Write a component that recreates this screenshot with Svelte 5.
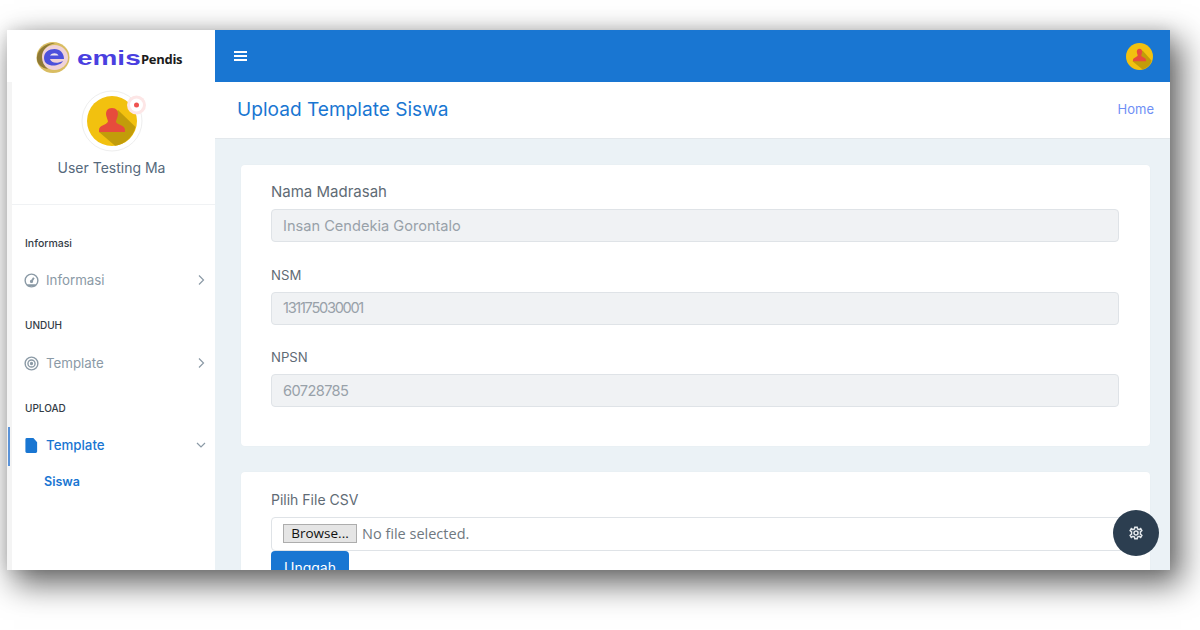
<script>
  const fields = [
    { label: "Nama Madrasah", value: "Insan Cendekia Gorontalo", kind: "long" },
    { label: "NSM", value: "131175030001", kind: "code" },
    { label: "NPSN", value: "60728785", kind: "num" }
  ];
</script>

<style>
  :global(body) {
    background: #fff;
    font-family: Inter, "Open Sans", sans-serif;
  }
  * {
    box-sizing: border-box;
  }
  .page {
    height: 630px;
    padding: 30px 30px 0 7px;
    overflow: hidden;
  }
  .frame {
    position: relative;
    display: flex;
    height: 540px;
    background: #fff;
    box-shadow: 0 0 14px rgba(0, 0, 0, 0.1), 9px 12px 30px 2px rgba(0, 0, 0, 0.6);
  }
  .sidebar {
    width: 208px;
    flex: none;
    display: flex;
    flex-direction: column;
    overflow: hidden;
    background: #fff;
  }
  .brand {
    height: 52px;
    flex: none;
    display: flex;
    align-items: center;
    padding: 3px 0 0 29px;
    white-space: nowrap;
  }
  .emis {
    display: inline-block;
    width: 64px;
    margin-left: 7px;
    color: #4a3fe0;
    font: 700 21px/1 "Liberation Sans", sans-serif;
    transform: scaleX(1.33);
    transform-origin: left;
  }
  .pendis {
    color: #1c1c1c;
    font: 700 13px/1 "Open Sans", sans-serif;
    letter-spacing: -0.3px;
    margin-top: 3px;
  }
  .side-body {
    flex: 1;
    margin-left: 5px;
    background: #fff;
    box-shadow: -5px 0 0 #f4f4f4;
  }
  .user {
    height: 123px;
    display: flex;
    flex-direction: column;
    align-items: center;
    padding-top: 8px;
    padding-right: 4px;
    border-bottom: 1px solid #f0f2f4;
  }
  .user-name {
    margin-top: 6px;
    font-size: 14px;
    line-height: 20px;
    color: #56697c;
  }
  .heading {
    margin: 0;
    padding-left: 13px;
    font-size: 10.5px;
    font-weight: 500;
    line-height: 16px;
    color: #333c46;
  }
  .heading.caps {
    font-size: 10px;
  }
  .nav {
    padding-top: 31px;
  }
  .item {
    position: relative;
    display: flex;
    align-items: center;
    gap: 7px;
    height: 38px;
    margin: 9px 0 18px;
    padding: 0 9px 0 12px;
    font-size: 13.3px;
    color: #8b9aa6;
  }
  .item.lower {
    margin-top: 11px;
  }
  .item.active {
    color: #1976d2;
    font-weight: 500;
    margin: 11px 0 0;
    height: 39px;
    padding-bottom: 3px;
  }
  .item.active::before {
    content: "";
    position: absolute;
    left: -4px;
    top: 0;
    bottom: 0;
    width: 2px;
    background: #5b93d8;
  }
  .item span {
    flex: 1;
  }
  .sub {
    display: block;
    padding: 8px 0 0 32px;
    font-size: 12.5px;
    font-weight: 600;
    color: #1976d2;
  }
  .main {
    flex: 1;
    min-width: 0;
    display: flex;
    flex-direction: column;
    overflow: hidden;
    background: #ebf2f6;
  }
  .topbar {
    height: 52px;
    flex: none;
    display: flex;
    align-items: center;
    justify-content: space-between;
    padding: 0 17px 0 19px;
    background: #1976d2;
  }
  .burger {
    display: flex;
    flex-direction: column;
    gap: 2px;
    width: 13px;
  }
  .burger i {
    display: block;
    height: 2px;
    background: #fff;
  }
  .titlebar {
    height: 57px;
    flex: none;
    display: flex;
    align-items: center;
    justify-content: space-between;
    padding: 0 16px 2px 22px;
    background: #fff;
    border-bottom: 1px solid #e3e8ec;
  }
  h1 {
    margin: 0;
    font-size: 19.1px;
    font-weight: 400;
    color: #1976d2;
  }
  .home {
    font-size: 13px;
    color: #6f8ff5;
  }
  .content {
    padding: 26px 20px 0 26px;
  }
  .card {
    background: #fff;
    border-radius: 4px;
    padding: 17px 30px 0;
    box-shadow: 0 0 2px rgba(0, 0, 0, 0.03);
  }
  .card.info {
    height: 281px;
    margin-bottom: 26px;
  }
  .card.upload {
    padding-top: 18px;
    height: 160px;
  }
  .field {
    margin-bottom: 22.500px;
  }
  label {
    display: block;
    margin-bottom: 7px;
    font-size: 14px;
    line-height: 20px;
    color: #5f6b75;
  }
  label.long {
    font-size: 15px;
  }
  label.code,
  label.num {
    font-size: 13.200px;
  }
  input {
    display: block;
    width: 848px;
    height: 33px;
    padding: 0 11px;
    border: 1px solid #dfe3e7;
    border-radius: 4px;
    font: 400 14.6px Inter, "Open Sans", sans-serif;
    color: #98a1a9;
    background: #f0f2f4;
    opacity: 1;
  }
  input.code {
    letter-spacing: -1.300px;
  }
  input.num {
    letter-spacing: -0.600px;
  }
  .file {
    display: flex;
    align-items: center;
    gap: 5px;
    width: 860px;
    height: 34px;
    padding: 0 11px 1px;
    border: 1px solid #dfe3e7;
    border-radius: 4px 0 0 4px;
    font: 14.5px "Open Sans", sans-serif;
    color: #6f7880;
  }
  .browse {
    height: 19px;
    width: 74px;
    padding: 0;
    border: 1px solid #adadad;
    background: #e5e5e5;
    font: 13.5px/1 "Open Sans", sans-serif;
    color: #111;
  }
  .submit {
    display: block;
    width: 78px;
    height: 32px;
    border: 0;
    border-radius: 4px;
    background: #1976d2;
    color: #fff;
    font: 14px Inter, sans-serif;
  }
  .gear {
    position: absolute;
    left: 1106px;
    top: 480px;
    width: 46px;
    height: 46px;
    display: flex;
    align-items: center;
    justify-content: center;
    border-radius: 50%;
    background: #2c3e50;
  }
</style>

<div class="page">
  <div class="frame">
    <aside class="sidebar">
      <div class="brand">
        <svg width="34" height="31" viewBox="0 0 34 31">
          <ellipse cx="17" cy="15.500" rx="16.500" ry="15.500" fill="#d9bd62" />
          <ellipse cx="18.500" cy="15.500" rx="13.500" ry="12.500" fill="#efd2d8" />
          <path d="M1 18C0 8 9 1 19 1C11 3 6 8 6 15C6 20 8 24 12 27C6 26 2 23 1 18Z" fill="#8f7a35" />
          <path d="M8 16C8 10 13 7 18.500 7C24 7 28 11 28 17H14C15 21 21 22 27 19C24 25 8 26 8 16Z" fill="#4c51dc" />
          <path d="M14 13.500C16 10.500 21 10.500 22.500 13.500Z" fill="#efe6f2" />
        </svg>
        <span class="emis">emis</span><span class="pendis">Pendis</span>
      </div>
      <div class="side-body">
        <div class="user">
          <svg width="62" height="62" viewBox="0 0 62 62" overflow="visible">
            <circle cx="31" cy="31" r="30" fill="#fff" stroke="#eeeeee" />
            <circle cx="31" cy="31" r="25" fill="#f2c10f" />
            <path d="M37 20L54.500 37A25 25 0 0 1 34 55.800L18 42Z" fill="#c29c0a" />
            <path d="M31 18C35.500 18 37.500 21 36.800 25.500C36.300 28 35 30 35 32C36 35 44 35 44 40V42H18V40C18 35 26 35 27 32C27 30 25.700 28 25.200 25.500C24.500 21 26.500 18 31 18Z" fill="#e74c3c" />
            <circle cx="55.500" cy="15" r="9.500" fill="#fde6e6" />
            <circle cx="55.500" cy="15" r="6.500" fill="#fff" />
            <circle cx="55.500" cy="15" r="2.500" fill="#ef5350" />
          </svg>
          <div class="user-name">User Testing Ma</div>
        </div>
        <nav class="nav">
          <h6 class="heading">Informasi</h6>
          <div class="item">
            <svg width="15" height="15" viewBox="0 0 16 16" fill="none" stroke="#8b9aa6" stroke-width="1.500">
              <circle cx="8" cy="8" r="6.800" />
              <path d="M8 9L10.500 5M3.500 13H12.500" stroke-width="2" />
              <circle cx="8" cy="9" r="1" fill="#8b9aa6" />
            </svg>
            <span>Informasi</span>
            <svg width="10" height="12" viewBox="0 0 10 12" fill="none" stroke="#8b9aa6" stroke-width="1.200"><path d="M3 1.500L7.500 6L3 10.500" /></svg>
          </div>
          <h6 class="heading caps">UNDUH</h6>
          <div class="item lower">
            <svg width="15" height="15" viewBox="0 0 16 16" fill="none" stroke="#8b9aa6" stroke-width="1.500">
              <circle cx="8" cy="8" r="6.800" />
              <circle cx="8" cy="8" r="3.800" />
              <circle cx="8" cy="8" r="1" fill="#8b9aa6" />
            </svg>
            <span>Template</span>
            <svg width="10" height="12" viewBox="0 0 10 12" fill="none" stroke="#8b9aa6" stroke-width="1.200"><path d="M3 1.500L7.500 6L3 10.500" /></svg>
          </div>
          <h6 class="heading caps">UPLOAD</h6>
          <div class="item active">
            <svg width="15" height="15" viewBox="0 0 16 16">
              <path d="M3 0H10L14 4.500V14.500A1.500 1.500 0 0 1 12.500 16H3A1.500 1.500 0 0 1 1.500 14.500V1.500A1.500 1.500 0 0 1 3 0Z" fill="#1976d2" />
            </svg>
            <span>Template</span>
            <svg width="10" height="12" viewBox="0 0 10 12" fill="none" stroke="#8b9aa6" stroke-width="1.200"><path d="M1 4L5 8L9 4" /></svg>
          </div>
          <a class="sub">Siswa</a>
        </nav>
      </div>
    </aside>
    <main class="main">
      <header class="topbar">
        <div class="burger"><i></i><i></i><i></i></div>
        <svg width="27" height="27" viewBox="0 0 62 62">
          <circle cx="31" cy="31" r="31" fill="#f2c10f" />
          <path d="M38 17L59 41A31 31 0 0 1 38 61L15 42Z" fill="#c29c0a" />
          <path d="M31 13C36 13 38 17 37 22C36.500 25 35 27 35 29C36 32 46 33 46 39V42H16V39C16 33 26 32 27 29C27 27 25.500 25 25 22C24 17 26 13 31 13Z" fill="#e74c3c" />
        </svg>
      </header>
      <div class="titlebar">
        <h1>Upload Template Siswa</h1>
        <a class="home">Home</a>
      </div>
      <div class="content">
        <section class="card info">
          {#each fields as f}
            <div class="field">
              <label class={f.kind}>{f.label}</label>
              <input class={f.kind} value={f.value} disabled />
            </div>
          {/each}
        </section>
        <section class="card upload">
          <label>Pilih File CSV</label>
          <div class="file">
            <button class="browse">Browse...</button>
            <span>No file selected.</span>
          </div>
          <button class="submit">Unggah</button>
        </section>
      </div>
    </main>
    <div class="gear">
      <svg width="14" height="14" viewBox="0 0 24 24" fill="none" stroke="#e4e8ec" stroke-width="2.600">
        <circle cx="12" cy="12" r="3.500" />
        <path d="M10 2H14L14.600 5L17.400 6.200L20 4.500L22 8L19.600 10L19.600 14L22 16L20 19.500L17.400 17.800L14.600 19L14 22H10L9.400 19L6.600 17.800L4 19.500L2 16L4.400 14L4.400 10L2 8L4 4.500L6.600 6.200L9.400 5Z" />
      </svg>
    </div>
  </div>
</div>
